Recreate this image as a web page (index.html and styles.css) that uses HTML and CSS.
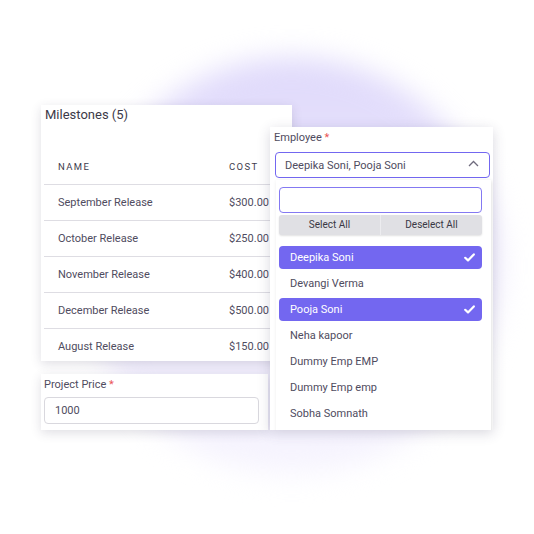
FILE: index.html
```html
<!DOCTYPE html>
<html lang="en">
<head>
    <meta charset="UTF-8">
    <meta name="viewport" content="width=device-width, initial-scale=1.0">
    <title>Milestones</title>
    <link rel="stylesheet" href="styles.css">
</head>
<body>
    <div class="stage">
        <div class="glow"></div>

        <div class="left">
            <section class="card milestones">
                <h2>Milestones (5)</h2>
                <table>
                    <thead>
                        <tr>
                            <th class="name">Name</th>
                            <th>Cost</th>
                        </tr>
                    </thead>
                    <tbody>
                        <tr><td>September Release</td><td>$300.00</td></tr>
                        <tr><td>October Release</td><td>$250.00</td></tr>
                        <tr><td>November Release</td><td>$400.00</td></tr>
                        <tr><td>December Release</td><td>$500.00</td></tr>
                        <tr><td>August Release</td><td>$150.00</td></tr>
                    </tbody>
                </table>
            </section>

            <section class="card price">
                <label>Project Price <span class="req">*</span></label>
                <div class="input">1000</div>
            </section>
        </div>

        <section class="card employee">
            <label>Employee <span class="req">*</span></label>
            <div class="select">
                <span>Deepika Soni, Pooja Soni</span>
                <svg class="chevron" width="11" height="7" viewBox="0 0 11 7">
                    <path d="M1 6 L5.5 1.5 L10 6" fill="none" stroke="#6f6b7d" stroke-width="1.3"/>
                </svg>
            </div>
            <div class="dropdown">
                <div class="search"></div>
                <div class="actions">
                    <span>Select All</span>
                    <span>Deselect All</span>
                </div>
                <ul class="options">
                    <li class="selected">Deepika Soni
                        <svg class="check" width="11" height="9" viewBox="0 0 11 9">
                            <path d="M1.2 4.8 L4 7.4 L9.8 1.4" fill="none" stroke="#fff" stroke-width="2.2" stroke-linecap="round" stroke-linejoin="round"/>
                        </svg>
                    </li>
                    <li>Devangi Verma</li>
                    <li class="selected">Pooja Soni
                        <svg class="check" width="11" height="9" viewBox="0 0 11 9">
                            <path d="M1.2 4.8 L4 7.4 L9.8 1.4" fill="none" stroke="#fff" stroke-width="2.2" stroke-linecap="round" stroke-linejoin="round"/>
                        </svg>
                    </li>
                    <li>Neha kapoor</li>
                    <li>Dummy Emp EMP</li>
                    <li>Dummy Emp emp</li>
                    <li>Sobha Somnath</li>
                </ul>
            </div>
        </section>
    </div>
</body>
</html>
```

FILE: styles.css
```css
body {
    margin: 0;
    background-color: #ffffff;
    font-family: Roboto, "Liberation Sans", sans-serif;
    color: #4f4c60;
}
.stage {
    position: relative;
    width: 534px;
    height: 534px;
    overflow: hidden;
    padding: 105px 0 0 41px;
    box-sizing: border-box;
}
.glow {
    position: absolute;
    left: 84px;
    top: 58px;
    width: 416px;
    height: 416px;
    border-radius: 50%;
    background: linear-gradient(180deg, #dfd9fb 0%, #ece8fc 45%, #f7f5fe 100%);
    filter: blur(14px);
}
.left {
    position: relative;
    display: flex;
    flex-direction: column;
    gap: 13px;
}
.card {
    background-color: #ffffff;
    box-shadow: 0 3px 10px rgba(60, 55, 90, 0.16);
}
.milestones {
    width: 251px;
    height: 256px;
    overflow: hidden;
}
.milestones h2 {
    margin: 0;
    padding: 1px 4px 0;
    font-size: 13px;
    line-height: 18px;
    font-weight: 400;
    color: #3c3a48;
}
table {
    margin: 24px 0 0 3px;
    width: 248px;
    border-collapse: collapse;
}
th, td {
    height: 35px;
    padding: 0 0 0 14px;
    text-align: left;
    font-size: 11px;
    white-space: nowrap;
}
th {
    height: 36px;
    font-size: 9.5px;
    font-weight: 400;
    text-transform: uppercase;
    letter-spacing: 1.4px;
    color: #3f3d4e;
}
th.name {
    width: 157px;
}
tbody td {
    border-top: 1px solid #dedde3;
}
.price {
    width: 227px;
    height: 56px;
    padding: 4px 9px 0 3px;
    box-sizing: border-box;
}
label {
    display: block;
    font-size: 11px;
    line-height: 14px;
}
.req {
    color: #ea5455;
}
.input {
    margin-top: 5px;
    height: 27px;
    border: 1px solid #d9d8de;
    border-radius: 4px;
    box-sizing: border-box;
    padding-left: 10px;
    font-size: 11px;
    line-height: 25px;
}
.employee {
    position: absolute;
    left: 270px;
    top: 127px;
    width: 223px;
    height: 303px;
    overflow: hidden;
    padding: 4px 0 0 4px;
    box-sizing: border-box;
    box-shadow: 0 3px 12px rgba(60, 55, 90, 0.2);
}
.select {
    display: flex;
    align-items: center;
    justify-content: space-between;
    margin: 7px 0 0 1px;
    width: 215px;
    height: 26px;
    border: 1px solid #7367f0;
    border-radius: 4px;
    box-sizing: border-box;
    padding: 0 10px 0 9px;
    font-size: 11px;
}
.chevron {
    margin-top: -3px;
}
.dropdown {
    margin: 2px 0 0 2px;
    width: 215px;
    height: 260px;
    padding: 7px 9px 0 3px;
    box-sizing: border-box;
    background-color: #ffffff;
    box-shadow: 1px 1px 4px rgba(0, 0, 0, 0.12);
}
.search {
    height: 26px;
    border: 1.5px solid #8479f2;
    border-radius: 4px;
    box-sizing: border-box;
}
.actions {
    display: flex;
    margin-top: 2px;
    height: 20px;
    background-color: #e0e0e4;
    border-radius: 3px;
    box-shadow: 0 1px 2px rgba(0, 0, 0, 0.12);
    font-size: 10px;
    color: #3a3844;
}
.actions span {
    flex: 1;
    text-align: center;
    line-height: 20px;
}
.actions span + span {
    border-left: 1px solid #ececef;
}
.options {
    list-style: none;
    margin: 11px 0 0;
    padding: 0;
}
.options li {
    display: flex;
    align-items: center;
    justify-content: space-between;
    height: 23px;
    margin-bottom: 3px;
    padding: 0 7px 0 11px;
    border-radius: 4px;
    font-size: 11px;
}
.options li.selected {
    background-color: #7367f0;
    color: #ffffff;
}
```
